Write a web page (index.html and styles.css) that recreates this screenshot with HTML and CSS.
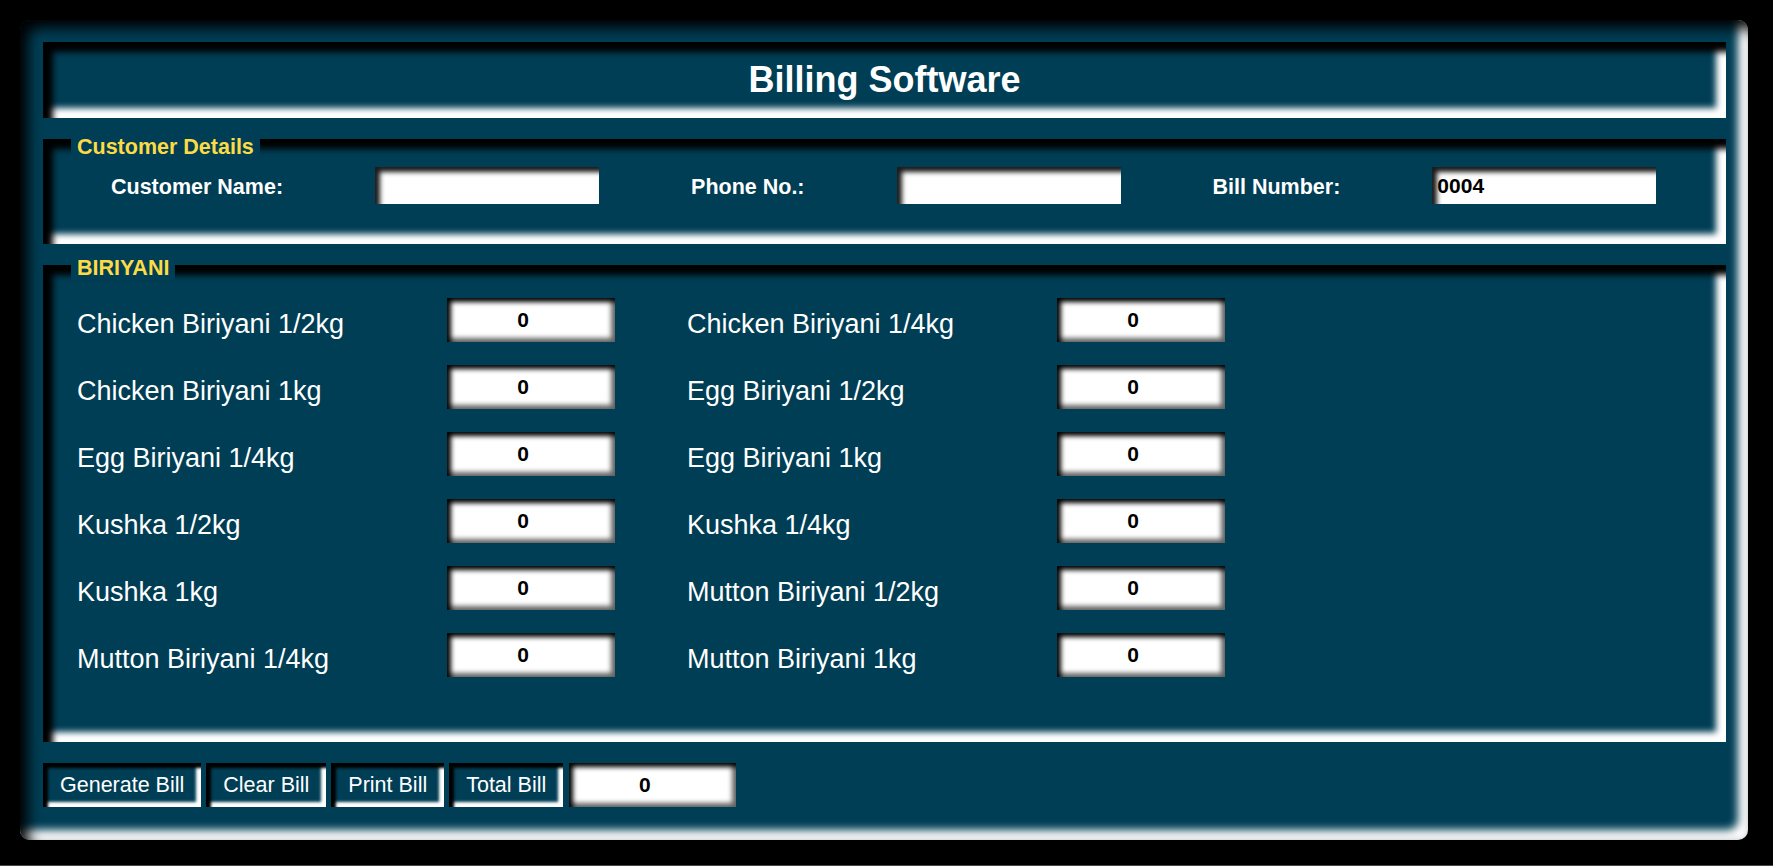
FILE: index.html
```html
<!DOCTYPE html>
<html lang="en">
<head>
<meta charset="utf-8">
<title>Billing Software</title>
<link rel="stylesheet" href="styles.css">
</head>
<body>
<div class="app">
  <header class="panel title-bar"><h1>Billing Software</h1></header>

  <section class="panel group customer">
    <span class="legend">Customer Details</span>
    <div class="customer-row">
      <label class="field-label">Customer Name:</label>
      <input class="entry" type="text" value="">
      <label class="field-label">Phone No.:</label>
      <input class="entry" type="text" value="">
      <label class="field-label">Bill Number:</label>
      <input class="entry" type="text" value="0004">
    </div>
  </section>

  <section class="panel group menu">
    <span class="legend legend-menu">BIRIYANI</span>
    <div class="items">
      <span class="item-label">Chicken Biriyani 1/2kg</span><input class="qty" type="text" value="0">
      <span class="item-label">Chicken Biriyani 1/4kg</span><input class="qty" type="text" value="0">
      <span class="item-label">Chicken Biriyani 1kg</span><input class="qty" type="text" value="0">
      <span class="item-label">Egg Biriyani 1/2kg</span><input class="qty" type="text" value="0">
      <span class="item-label">Egg Biriyani 1/4kg</span><input class="qty" type="text" value="0">
      <span class="item-label">Egg Biriyani 1kg</span><input class="qty" type="text" value="0">
      <span class="item-label">Kushka 1/2kg</span><input class="qty" type="text" value="0">
      <span class="item-label">Kushka 1/4kg</span><input class="qty" type="text" value="0">
      <span class="item-label">Kushka 1kg</span><input class="qty" type="text" value="0">
      <span class="item-label">Mutton Biriyani 1/2kg</span><input class="qty" type="text" value="0">
      <span class="item-label">Mutton Biriyani 1/4kg</span><input class="qty" type="text" value="0">
      <span class="item-label">Mutton Biriyani 1kg</span><input class="qty" type="text" value="0">
    </div>
  </section>

  <div class="actions">
    <button class="btn">Generate Bill</button>
    <button class="btn">Clear Bill</button>
    <button class="btn">Print Bill</button>
    <button class="btn">Total Bill</button>
    <input class="qty total" type="text" value="0">
  </div>
</div>
</body>
</html>
```

FILE: styles.css
```css
html, body {
  margin: 0;
}

body {
  background: #000;
  height: 866px;
  box-sizing: border-box;
  padding: 20px 0 0 20px;
  border-bottom: 1px solid #474747;
  font-family: "Liberation Sans", Arial, sans-serif;
  overflow: hidden;
}

.app {
  width: 1728px;
  height: 820px;
  box-sizing: border-box;
  background: #003e55;
  border-radius: 10px;
  box-shadow: inset 8px 8px 14px #000, inset -10px -10px 8px #fff;
  padding: 22px 22px 0 23px;
  display: flex;
  flex-direction: column;
  gap: 21px;
}

.panel {
  background: #003e55;
  box-shadow: inset 10px 10px 6px #000, inset -10px -10px 6px #fff;
}

.title-bar {
  height: 76px;
  display: flex;
  align-items: center;
  justify-content: center;
}

.title-bar h1 {
  margin: 0;
  font-size: 36px;
  font-weight: bold;
  color: #fff;
}

.group {
  position: relative;
}

.legend {
  position: absolute;
  left: 28px;
  top: -4px;
  background: #003e55;
  padding: 0 6px;
  color: #fddb45;
  font-weight: bold;
  font-size: 21.5px;
  line-height: 24px;
}

.legend-menu {
  top: -9px;
}

.customer {
  height: 105px;
  box-sizing: border-box;
  padding: 28px 0 0 68px;
}

.customer-row {
  display: flex;
  align-items: center;
  gap: 92px;
}

.field-label {
  color: #fff;
  font-weight: bold;
  font-size: 21.5px;
  padding-top: 4px;
}

.entry {
  width: 224px;
  height: 37px;
  margin: 0;
  border: 0;
  outline: none;
  padding: 0 5px;
  box-sizing: border-box;
  background: #fff;
  box-shadow: inset 5px 5px 5px #1a1a1a;
  font-family: "Liberation Sans", Arial, sans-serif;
  font-weight: bold;
  font-size: 21px;
  color: #000;
}

.menu {
  height: 477px;
  box-sizing: border-box;
  padding: 33px 0 0 34px;
}

.items {
  display: grid;
  grid-template-columns: 370px 240px 370px 168px;
  grid-auto-rows: 44px;
  row-gap: 23px;
  align-items: center;
}

.item-label {
  color: #fff;
  font-size: 27px;
  padding-top: 9px;
  white-space: nowrap;
}

.qty {
  width: 168px;
  height: 44px;
  margin: 0;
  border: 0;
  outline: none;
  padding: 0 16px 0 0;
  box-sizing: border-box;
  background: #fff;
  text-align: center;
  box-shadow: inset 4px 4px 5px #000, inset -4px -4px 5px #666;
  font-family: "Liberation Sans", Arial, sans-serif;
  font-weight: bold;
  font-size: 21px;
  color: #000;
}

.actions {
  display: flex;
  gap: 5px;
  height: 44px;
}

.btn {
  height: 44px;
  margin: 0;
  padding: 0 17px;
  border: 0;
  background: #003e55;
  color: #fff;
  font-family: "Liberation Sans", Arial, sans-serif;
  font-size: 21.5px;
  box-shadow: inset 5px 5px 3px #000, inset -5px -5px 3px #fff;
}

.total {
  width: 167px;
  margin-left: 1px;
}
```
